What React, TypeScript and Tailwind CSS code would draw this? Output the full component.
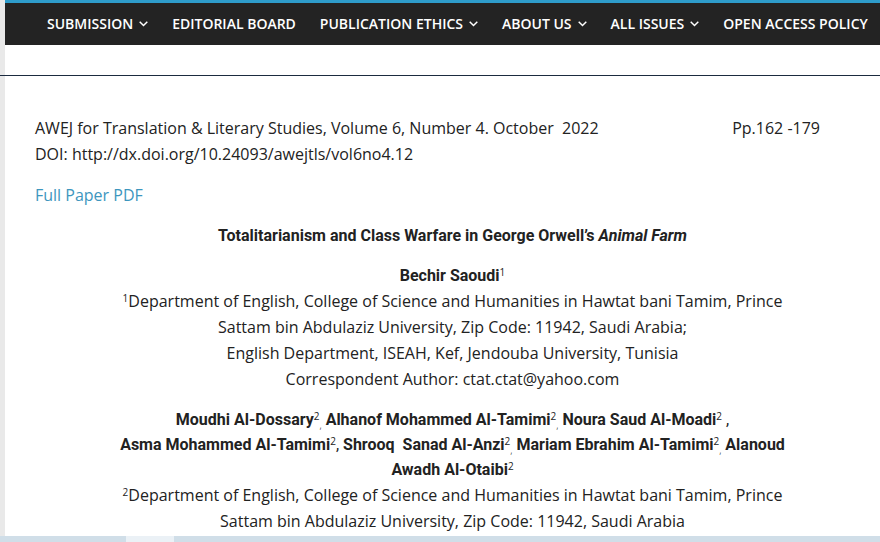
import React from "react";

type NavItem = { label: string; hasMenu: boolean };

const navItems: NavItem[] = [
  { label: "SUBMISSION", hasMenu: true },
  { label: "EDITORIAL BOARD", hasMenu: false },
  { label: "PUBLICATION ETHICS", hasMenu: true },
  { label: "ABOUT US", hasMenu: true },
  { label: "ALL ISSUES", hasMenu: true },
  { label: "OPEN ACCESS POLICY", hasMenu: false },
];

function Chevron() {
  return (
    <svg width="9" height="6" viewBox="0 0 9 6" fill="none" aria-hidden="true">
      <path d="M0.7 0.8l3.8 3.7L8.3 0.8" stroke="#fff" strokeWidth="1.5" />
    </svg>
  );
}

function Sup({ children }: { children: React.ReactNode }) {
  return (
    <sup className="top-0 align-[5px] font-['Open_Sans',sans-serif] text-[10px] leading-none font-normal">
      {children}
    </sup>
  );
}

function Comma() {
  return (
    <sub className="bottom-0 align-[-4px] font-['Open_Sans',sans-serif] text-[10px] leading-none font-light">
      ,
    </sub>
  );
}

export default function App() {
  return (
    <div className="flex min-h-screen flex-col overflow-x-hidden bg-white font-['Open_Sans',sans-serif] text-base leading-[26px] text-[#222]">
      <header className="border-l-[5px] border-[#e9e9e9] pb-[30px]">
        <nav className="border-t-[3px] border-[#2e9ccb] bg-[#232323] pl-[42px]">
          <ul className="flex h-[42px] items-center gap-6 text-sm font-semibold whitespace-nowrap text-white">
            {navItems.map((item) => (
              <li key={item.label}>
                <a href="#" className="flex items-center gap-1.5">
                  {item.label}
                  {item.hasMenu && <Chevron />}
                </a>
              </li>
            ))}
          </ul>
        </nav>
      </header>
      <hr className="border-t border-[#1b2b3f]" />
      <main className="flex flex-1 flex-col gap-[15px] border-l-[5px] border-[#e9e9e9] pt-[39px] pr-[10px] pl-[30px]">
        <div>
          <p className="flex justify-between pr-[50px]">
            <span className="whitespace-pre">
              AWEJ for Translation &amp; Literary Studies, Volume 6, Number 4. October{"  "}2022
            </span>
            <span>Pp.162 -179</span>
          </p>
          <p>DOI: http://dx.doi.org/10.24093/awejtls/vol6no4.12</p>
        </div>
        <p>
          <a href="#" className="text-[#3d96be]">Full Paper PDF</a>
        </p>
        <h1 className="text-center font-['Roboto',sans-serif] leading-[25px] font-bold">
          Totalitarianism and Class Warfare in George Orwell’s <em>Animal Farm</em>
        </h1>
        <section className="text-center">
          <h2 className="font-['Roboto',sans-serif] leading-[25px] font-bold">
            Bechir Saoudi<Sup>1</Sup>
          </h2>
          <p>
            <Sup>1</Sup>Department of English, College of Science and Humanities in Hawtat bani Tamim, Prince
            <br />
            Sattam bin Abdulaziz University, Zip Code: 11942, Saudi Arabia;
          </p>
          <p>English Department, ISEAH, Kef, Jendouba University, Tunisia</p>
          <p>Correspondent Author: ctat.ctat@yahoo.com</p>
        </section>
        <section className="text-center">
          <h2 className="font-['Roboto',sans-serif] leading-[25px] font-bold">
            Moudhi Al-Dossary<Sup>2</Sup><Comma /> Alhanof Mohammed Al-Tamimi<Sup>2</Sup><Comma /> Noura Saud Al-Moadi<Sup>2</Sup>{" "}
            <span className="font-normal">,</span>
            <br />
            Asma Mohammed Al-Tamimi<Sup>2</Sup><span className="font-normal">,</span> Shrooq&nbsp; Sanad Al-Anzi<Sup>2</Sup><Comma /> Mariam Ebrahim Al-Tamimi<Sup>2</Sup><Comma /> Alanoud
            <br />
            Awadh Al-Otaibi<Sup>2</Sup>
          </h2>
          <p>
            <Sup>2</Sup>Department of English, College of Science and Humanities in Hawtat bani Tamim, Prince
            <br />
            Sattam bin Abdulaziz University, Zip Code: 11942, Saudi Arabia
          </p>
        </section>
      </main>
      <footer className="h-1.5 bg-[#d0dee8] pl-[126px]">
        <div className="h-full w-12 bg-[#ebf1f6]" />
      </footer>
    </div>
  );
}
